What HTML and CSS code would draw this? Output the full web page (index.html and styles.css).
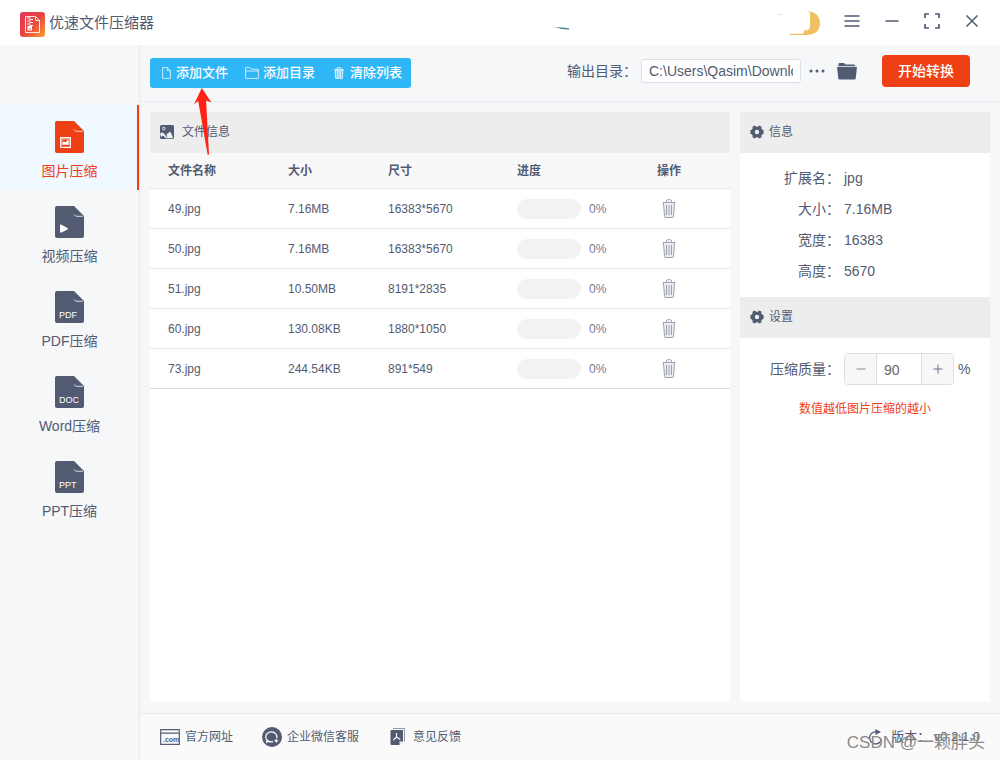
FILE: index.html
```html
<!DOCTYPE html>
<html lang="zh-CN">
<head>
<meta charset="utf-8">
<title>优速文件压缩器</title>
<meta name="viewport" content="width=device-width, initial-scale=1">
<link rel="stylesheet" href="styles.css">
</head>
<body>
<svg class="defs" aria-hidden="true">
  <symbol id="trash" viewBox="0 0 14 20">
    <path d="M1.500 4l1 13.500q.1 1 1.500 1h6q1.400 0 1.500-1l1-13.500z" fill="#eceef1"/>
    <path d="M.5 3.500h13M4.500 3.500V1.800a1 1 0 0 1 1-1h3a1 1 0 0 1 1 1v1.700M1.500 4l1 13.500q.1 1 1.500 1h6q1.400 0 1.500-1l1-13.500M4.500 6v10M7 6v10M9.500 6v10" fill="none" stroke="currentColor"/>
  </symbol>
  <symbol id="gear" viewBox="0 0 14 14">
    <path fill="currentColor" fill-rule="evenodd" d="M4 .8h1.500L6 1.800h2l.5-1H10l1.500 1-.2 1.500 1 1.400L13.600 5v4l-1.300.3-1 1.400.2 1.500-1.500 1H8.500l-.5-1H6l-.5 1H4l-1.500-1 .2-1.500-1-1.400L.4 9V5l1.300-.3 1-1.400-.2-1.500zM7 4.800a2.200 2.200 0 1 0 0 4.400 2.200 2.200 0 0 0 0-4.400z"/>
  </symbol>
  <symbol id="doc" viewBox="0 0 29 32">
    <path fill="currentColor" d="M2 0h17l10 10v20q0 2-2 2H2q-2 0-2-2V2q0-2 2-2z"/>
    <path d="M19 8.500q1 1.800 3 1.800h6" fill="none" stroke="#fff" stroke-width=".9" opacity=".85"/>
  </symbol>
</svg>

<div class="app">
  <header class="titlebar">
    <svg class="logo" viewBox="0 0 25 25" aria-hidden="true">
      <defs><linearGradient id="lg" x1="0" y1="0" x2="1" y2="1"><stop offset="0" stop-color="#e2335c"/><stop offset=".5" stop-color="#e8463f"/><stop offset="1" stop-color="#f3a135"/></linearGradient></defs>
      <rect width="25" height="25" rx="3" fill="url(#lg)"/>
      <path d="M5.500 4.500h10l4 4v12h-14zM15.500 4.500v4h4" fill="none" stroke="#fff" stroke-opacity=".85"/>
      <path d="M7 6h3.500M9.500 7.500H13M7 9h3.500M9.500 10.500H13M7 12h3.500M9.500 13.500H13" stroke="#fff"/>
      <path d="M7.500 14h4.500v4.500H7.500z" fill="#fff"/><path d="M8.700 17h2.200" stroke="#e8463f" stroke-width=".8"/>
    </svg>
    <h1 class="title">优速文件压缩器</h1>
    <svg class="promo" viewBox="0 0 276 32" aria-hidden="true">
      <path d="M10 21.200q7 0 15 1v1.300q-8-.2-11-1.500z" fill="#3b8288"/>
      <path d="M233 8h5v1h-5z" fill="#f5dfae"/>
      <path d="M261 4.800q15 1 15 12.400T262 29h-17l1.500-1.200h12q2-1 1.500-3.500 6 1 6-5V7q-1-2-5-2.200z" fill="#efbf63"/>
    </svg>
    <div class="window-controls">
      <button type="button" class="win" aria-label="菜单"><svg viewBox="0 0 16 16"><path d="M.5 3h15M.5 8h15M.5 13h15" stroke-width="1.500"/></svg></button>
      <button type="button" class="win" aria-label="最小化"><svg viewBox="0 0 16 16"><path d="M1.500 8h13" stroke-width="1.500"/></svg></button>
      <button type="button" class="win" aria-label="最大化"><svg viewBox="0 0 16 16"><path d="M1 5V1h4M11 1h4v4M15 11v4h-4M5 15H1v-4" stroke-width="1.700"/></svg></button>
      <button type="button" class="win" aria-label="关闭"><svg viewBox="0 0 16 16"><path d="M2.500 2.500l11 11M13.500 2.500l-11 11" stroke-width="1.500"/></svg></button>
    </div>
  </header>

  <div class="body">
    <nav class="sidebar">
      <a href="#image" class="nav-item active" aria-current="page">
        <svg class="nav-icon" viewBox="0 0 29 32"><use href="#doc"/><path d="M5.700 16.700h9.600v9.600H5.700z" fill="none" stroke="#fff" stroke-width="1.200"/><path d="M7 18h7v5.500H7z" fill="none" stroke="#fff" stroke-width=".7"/><path d="M7.500 23v-1.500l1.500-1 1.500 1 2-2.500 1 1V23z" fill="#fff"/></svg>
        <span>图片压缩</span></a>
      <a href="#video" class="nav-item">
        <svg class="nav-icon" viewBox="0 0 29 32"><use href="#doc"/><path d="M5 19.500q0-1.500 1.500-.8l6 3.200q1 .8 0 1.500l-6 3.200q-1.500.5-1.500-1z" fill="#fff"/></svg>
        <span>视频压缩</span></a>
      <a href="#pdf" class="nav-item">
        <svg class="nav-icon" viewBox="0 0 29 32"><use href="#doc"/><text class="doc-text" x="4" y="27">PDF</text></svg>
        <span>PDF压缩</span></a>
      <a href="#word" class="nav-item">
        <svg class="nav-icon" viewBox="0 0 29 32"><use href="#doc"/><text class="doc-text" x="4" y="27">DOC</text></svg>
        <span>Word压缩</span></a>
      <a href="#ppt" class="nav-item">
        <svg class="nav-icon" viewBox="0 0 29 32"><use href="#doc"/><text class="doc-text" x="4" y="27">PPT</text></svg>
        <span>PPT压缩</span></a>
    </nav>

    <div class="main">
      <div class="toolbar">
        <div class="actions">
          <button type="button" class="action"><svg class="i-file" viewBox="0 0 9 12"><path d="M.6.6h4.800l3 3v7.800H.6zM5.400.6v3h3"/></svg>添加文件</button>
          <button type="button" class="action"><svg class="i-folder" viewBox="0 0 14 12"><path d="M.6.6h4.400l1.500 1.600h6.900v9.200H.6zM.6 4h12.800"/></svg>添加目录</button>
          <button type="button" class="action"><svg class="i-bin" viewBox="0 0 10 12"><path d="M1.200 3.300l.5 8h6.600l.5-8z" fill="#fff" fill-opacity=".4"/><path d="M.2 2.400h9.600M3.200 2.200V.7h3.600v1.500M1.200 3.300l.5 8h6.600l.5-8zM3.500 4v6.500M5 4v6.500M6.500 4v6.500"/></svg>清除列表</button>
          <svg class="pointer" viewBox="0 0 18 68" aria-hidden="true"><path d="M7.800 0 17.400 14.500l-5.300-1.900L15 66.500l-1.300.5L4.200 13 0 16.500z" fill="#ff2317"/></svg>
        </div>
        <div class="output">
          <label for="out">输出目录：</label>
          <input id="out" class="path" type="text" value="C:\Users\Qasim\Downloads">
          <button type="button" class="plain more" aria-label="更多"><svg viewBox="0 0 16 4"><circle cx="2" cy="2" r="1.500"/><circle cx="8" cy="2" r="1.500"/><circle cx="14" cy="2" r="1.500"/></svg></button>
          <button type="button" class="plain folder" aria-label="打开目录"><svg viewBox="0 0 20 18"><path d="M1.500 4V2q0-1 1-1h4.500l1.500 1.500H17q1 0 1 1V4z"/><path d="M1 4.800h18q1 0 .9 1L18.700 16.500q-.2 1-1.200 1h-15q-1 0-1.200-1L.1 5.800q-.1-1 .9-1z"/></svg></button>
          <button type="button" class="start">开始转换</button>
        </div>
      </div>

      <div class="content">
        <section class="panel files">
          <h2 class="panel-head"><svg class="i-pic" viewBox="0 0 14 14"><path d="M1.500 0h11q1.500 0 1.500 1.500v11q0 1.500-1.500 1.500h-11Q0 14 0 12.500v-11Q0 0 1.500 0z" fill="currentColor"/><circle cx="3.800" cy="3.500" r="1.300" fill="none" stroke="#ededed"/><path d="M0 8.500q2.500-2 4 0L7.500 13l-1-3.500 3.500-3q2 2 3 6.500-1 .5-6 .3H6L3 10.500 1 12z" fill="#ededed"/></svg>文件信息</h2>
          <table class="table">
            <colgroup><col class="c-name"><col class="c-size"><col class="c-dim"><col class="c-prog"><col></colgroup>
            <thead><tr><th>文件名称</th><th>大小</th><th>尺寸</th><th>进度</th><th>操作</th></tr></thead>
            <tbody>
              <tr><td>49.jpg</td><td>7.16MB</td><td>16383*5670</td><td><div class="progress"><i class="bar"></i>0%</div></td><td><button type="button" class="plain del" aria-label="删除"><svg><use href="#trash"/></svg></button></td></tr>
              <tr><td>50.jpg</td><td>7.16MB</td><td>16383*5670</td><td><div class="progress"><i class="bar"></i>0%</div></td><td><button type="button" class="plain del" aria-label="删除"><svg><use href="#trash"/></svg></button></td></tr>
              <tr><td>51.jpg</td><td>10.50MB</td><td>8191*2835</td><td><div class="progress"><i class="bar"></i>0%</div></td><td><button type="button" class="plain del" aria-label="删除"><svg><use href="#trash"/></svg></button></td></tr>
              <tr><td>60.jpg</td><td>130.08KB</td><td>1880*1050</td><td><div class="progress"><i class="bar"></i>0%</div></td><td><button type="button" class="plain del" aria-label="删除"><svg><use href="#trash"/></svg></button></td></tr>
              <tr><td>73.jpg</td><td>244.54KB</td><td>891*549</td><td><div class="progress"><i class="bar"></i>0%</div></td><td><button type="button" class="plain del" aria-label="删除"><svg><use href="#trash"/></svg></button></td></tr>
            </tbody>
          </table>
        </section>

        <aside class="panel side">
          <h2 class="panel-head tight"><svg class="i-gear"><use href="#gear"/></svg>信息</h2>
          <dl class="info">
            <dt>扩展名：</dt><dd>jpg</dd>
            <dt>大小：</dt><dd>7.16MB</dd>
            <dt>宽度：</dt><dd>16383</dd>
            <dt>高度：</dt><dd>5670</dd>
          </dl>
          <h2 class="panel-head tight"><svg class="i-gear"><use href="#gear"/></svg>设置</h2>
          <div class="quality">
            <label for="q">压缩质量：</label>
            <div class="stepper">
              <button type="button" aria-label="减少"><svg viewBox="0 0 10 10"><path d="M.5 5h9" stroke="#82879a"/></svg></button>
              <input id="q" type="text" value="90">
              <button type="button" aria-label="增加"><svg viewBox="0 0 10 10"><path d="M.5 5h9M5 .5v9" stroke="#6a7084"/></svg></button>
            </div>
            <span>%</span>
          </div>
          <p class="hint">数值越低图片压缩的越小</p>
        </aside>
      </div>

      <footer class="footer">
        <a href="#site" class="link site"><svg viewBox="0 0 20 16"><path d="M.7.700h18.600v14.600H.7zM.7 4.200h18.600" fill="none" stroke="currentColor" stroke-width="1.200"/><text x="3" y="12.700" class="com">.com</text></svg>官方网址</a>
        <a href="#wechat" class="link wechat"><svg viewBox="0 0 20 20"><circle cx="10" cy="10" r="10" fill="currentColor"/><path d="M14.800 11a5.600 5 0 1 0-3.800 3.700M5 12.500l-.3 2.800 2.500-1.300" fill="none" stroke="#fff" stroke-width="1.200"/><path d="m14.300 11.300.8 1.600 1.700.8-1.700.8-.8 1.700-.8-1.700-1.700-.8 1.700-.8z" fill="#fff"/></svg>企业微信客服</a>
        <a href="#feedback" class="link feedback"><svg viewBox="0 0 15 18"><path d="M3 .5h11.500v13" fill="none" stroke="currentColor" opacity=".6"/><path d="M1.500 2H13v11.500L9.500 17h-8q-1 0-1-1V3q0-1 1-1z" fill="currentColor"/><path d="M6.500 5v4L3.300 12.200M6.500 9l3.800 2.500" fill="none" stroke="#fff" stroke-width="1.100"/><path d="M9.500 17v-3.500H13z" fill="#fafafa"/></svg>意见反馈</a>
        <div class="version"><svg viewBox="0 0 15 16"><path d="M8.500 3A6 6 0 1 0 13.500 10" fill="none" stroke="currentColor" stroke-width="1.300"/><path d="M7.500 0l5.500 3-5.500 3z" fill="currentColor"/></svg>版本：&nbsp;v0.2.1.0</div>
        <span class="watermark">CSDN @一颗胖头</span>
      </footer>
    </div>
  </div>
</div>
</body>
</html>
```
FILE: styles.css
```css
* { box-sizing: border-box; }

body {
  margin: 0;
  color: #525b72;
  background: #f5f7f9;
  font: 14px/20px "Liberation Sans", "Noto Sans CJK SC", sans-serif;
}

h1, h2, p, dl, dd { margin: 0; font-weight: 400; }
a { color: inherit; text-decoration: none; }
button, input { font: inherit; color: inherit; margin: 0; padding: 0; }
button { border: 0; background: none; cursor: pointer; }
svg { display: block; flex: none; }

.defs { position: absolute; width: 0; height: 0; }
.app { display: flex; flex-direction: column; min-height: 100vh; }

/* Title bar */
.titlebar {
  display: flex;
  align-items: center;
  height: 45px;
  padding: 0 8px 0 20px;
  background: #fff;
}
.logo { width: 25px; height: 25px; margin: 4px 4px 0 0; }
.title { font-size: 15px; line-height: 24px; }
.promo { width: 276px; height: 32px; margin: 0 12px 2px auto; }
.window-controls { display: flex; padding-bottom: 3px; }
.win { display: grid; place-items: center; width: 40px; height: 42px; }
.win svg { width: 16px; height: 16px; fill: none; stroke: currentColor; }

.body { display: flex; flex: 1; }

/* Sidebar */
.sidebar { width: 140px; padding-top: 60px; border-right: 1px solid #e9ebee; }
.nav-item {
  display: flex;
  flex-direction: column;
  align-items: center;
  gap: 8px;
  height: 85px;
  padding-top: 16px;
}
.nav-item.active {
  color: #ee4014;
  background: #f0f9ff;
  border-right: 2px solid #ee4014;
  padding-left: 2px;
}
.nav-icon { width: 29px; height: 32px; }
.doc-text { fill: #fff; font: 9px "Liberation Sans", sans-serif; }

.main { display: flex; flex-direction: column; flex: 1; min-width: 0; }

/* Toolbar */
.toolbar {
  display: flex;
  align-items: center;
  justify-content: space-between;
  height: 57px;
  padding: 0 30px 0 10px;
  border-bottom: 1px solid #e9ebee;
}
.actions {
  position: relative;
  display: flex;
  gap: 17px;
  height: 30px;
  padding: 0 9px 0 12px;
  border-radius: 3px;
  background: #2eb6f6;
}
.action { display: flex; align-items: center; gap: 4px; color: #fff; font-size: 13px; font-weight: 500; }
.action svg { fill: none; stroke: #fff; opacity: .75; }
.i-file { width: 9px; height: 12px; margin-right: 1px; }
.i-folder { width: 14px; height: 12px; }
.i-bin { width: 10px; height: 12px; margin: 0 2px; }
.pointer { position: absolute; left: 44px; top: 30px; width: 18px; height: 68px; z-index: 2; }

.output { display: flex; align-items: center; padding-bottom: 4px; }
.output label { margin-right: 4px; }
.path {
  width: 160px;
  height: 24px;
  padding: 0 7px;
  border: 1px solid #dcdfe6;
  border-radius: 3px;
  background: #fff;
}
.plain { display: grid; place-items: center; }
.more { margin-left: 8px; }
.more svg { width: 16px; height: 4px; fill: currentColor; }
.folder { margin-left: 12px; }
.folder svg { width: 20px; height: 18px; fill: currentColor; }
.start {
  width: 88px;
  height: 32px;
  margin-left: 25px;
  border-radius: 4px;
  color: #fff;
  background: #ee4014;
  font-weight: 500;
}

/* Panels */
.content { display: flex; flex: 1; gap: 10px; padding: 10px 10px 11px; }
.panel { background: #fff; }
.files { flex: 1; min-width: 0; }
.side { width: 250px; }
.panel-head {
  display: flex;
  align-items: center;
  gap: 8px;
  height: 41px;
  padding: 0 10px 2px;
  background: #ededed;
  font-size: 12px;
}
.panel-head.tight { gap: 5px; }
.i-pic, .i-gear { width: 14px; height: 14px; }

.table { width: 100%; border-collapse: separate; border-spacing: 0; table-layout: fixed; font-size: 12px; }
.c-name { width: 138px; }
.c-size { width: 100px; }
.c-dim { width: 129px; }
.c-prog { width: 140px; }
.table th, .table td { height: 40px; padding: 0; text-align: left; border-bottom: 1px solid #e8e8ea; }
.table th { height: 36px; background: #f8f8f8; font-weight: 700; }
.table th:first-child, .table td:first-child { padding-left: 18px; }
.table tbody tr:last-child td { border-color: #d9dbe0; }
.progress { display: flex; align-items: center; gap: 8px; color: #747b8e; }
.bar { width: 64px; height: 20px; border-radius: 10px; background: #f2f2f2; }
.del { margin-left: 5px; color: #9a9faf; }
.del svg { width: 14px; height: 20px; }

.info { display: grid; grid-template-columns: 100px 1fr; column-gap: 4px; padding: 10px 0; line-height: 31px; }
.info dt { text-align: right; }

.quality { display: flex; align-items: center; padding: 15px 0 0; }
.quality label { width: 100px; margin-right: 4px; text-align: right; }
.quality span { margin-left: 4px; }
.stepper {
  display: flex;
  width: 110px;
  height: 32px;
  border: 1px solid #dcdfe6;
  border-radius: 4px;
  overflow: hidden;
}
.stepper button { display: grid; place-items: center; width: 31px; background: #f7f7f7; }
.stepper svg { width: 10px; height: 10px; }
.stepper input {
  flex: 1;
  min-width: 0;
  padding: 2px 7px 0;
  border: solid #dcdfe6;
  border-width: 0 1px;
  color: #666;
  background: #fff;
}
.hint { margin-top: 14px; color: #ee4014; font-size: 12px; text-align: center; }

/* Footer */
.footer {
  position: relative;
  display: flex;
  align-items: center;
  height: 47px;
  padding: 0 20px;
  border-top: 1px solid #e9ebee;
  background: #fafafa;
  font-size: 12px;
}
.link { display: flex; align-items: center; gap: 5px; margin-right: 29px; }
.link svg { height: 20px; }
.site svg, .wechat svg { width: 20px; }
.feedback svg { width: 15px; height: 18px; }
.link.feedback { gap: 8px; margin-left: 2px; }
.com { fill: currentColor; font: bold 7px "Liberation Sans", sans-serif; }
.version { display: flex; align-items: center; margin-left: auto; font-size: 13px; }
.version svg { width: 15px; height: 16px; margin-right: 8px; }
.watermark {
  position: absolute;
  right: 15px;
  bottom: 5px;
  color: #8b8b8b;
  font-size: 17px;
  line-height: 24px;
  white-space: nowrap;
}
```
